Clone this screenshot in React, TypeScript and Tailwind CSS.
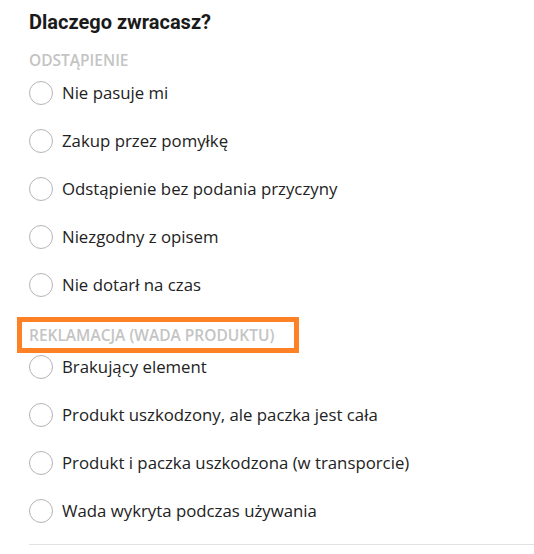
import React from "react";

const returns = [
  "Nie pasuje mi",
  "Zakup przez pomyłkę",
  "Odstąpienie bez podania przyczyny",
  "Niezgodny z opisem",
  "Nie dotarł na czas",
];

const complaints = [
  "Brakujący element",
  "Produkt uszkodzony, ale paczka jest cała",
  "Produkt i paczka uszkodzona (w transporcie)",
  "Wada wykryta podczas używania",
];

function Option({ label }: { label: string }) {
  return (
    <label className="flex h-[48px] items-center gap-[9px] cursor-pointer">
      <span className="h-[24px] w-[24px] shrink-0 rounded-full border border-[#b4b4b4] bg-white" />
      <span className="text-[16.8px] text-[#222222]">{label}</span>
    </label>
  );
}

export default function App() {
  return (
    <div
      className="min-h-[554px] bg-white pl-[29px] pt-[8px]"
      style={{ fontFamily: '"Open Sans", sans-serif' }}
    >
      {/* Heading */}
      <h2
        className="h-[28px] text-[20px] font-bold leading-[28px] text-[#1a1a1a]"
        style={{ fontFamily: "Roboto, sans-serif" }}
      >
        Dlaczego zwracasz?
      </h2>

      {/* Odstąpienie */}
      <div className="mt-[15px] h-[18px] text-[15.5px] font-semibold leading-[18px] text-[#c4c4c4]">
        ODSTĄPIENIE
      </div>
      <div className="flex flex-col">
        {returns.map((r) => (
          <Option key={r} label={r} />
        ))}
      </div>

      {/* Reklamacja */}
      <div className="relative mt-[17px] h-[18px] text-[15.5px] font-semibold leading-[18px] text-[#c4c4c4]">
        REKLAMACJA (WADA PRODUKTU)
        <span className="absolute left-[-12px] top-[-9px] h-[36px] w-[282px] border-[5px] border-[#ff8126]" />
      </div>
      <div className="-mt-px flex flex-col">
        {complaints.map((r) => (
          <Option key={r} label={r} />
        ))}
      </div>

      <div className="mt-[9px] h-px bg-[#e2e2e2]" />
    </div>
  );
}
